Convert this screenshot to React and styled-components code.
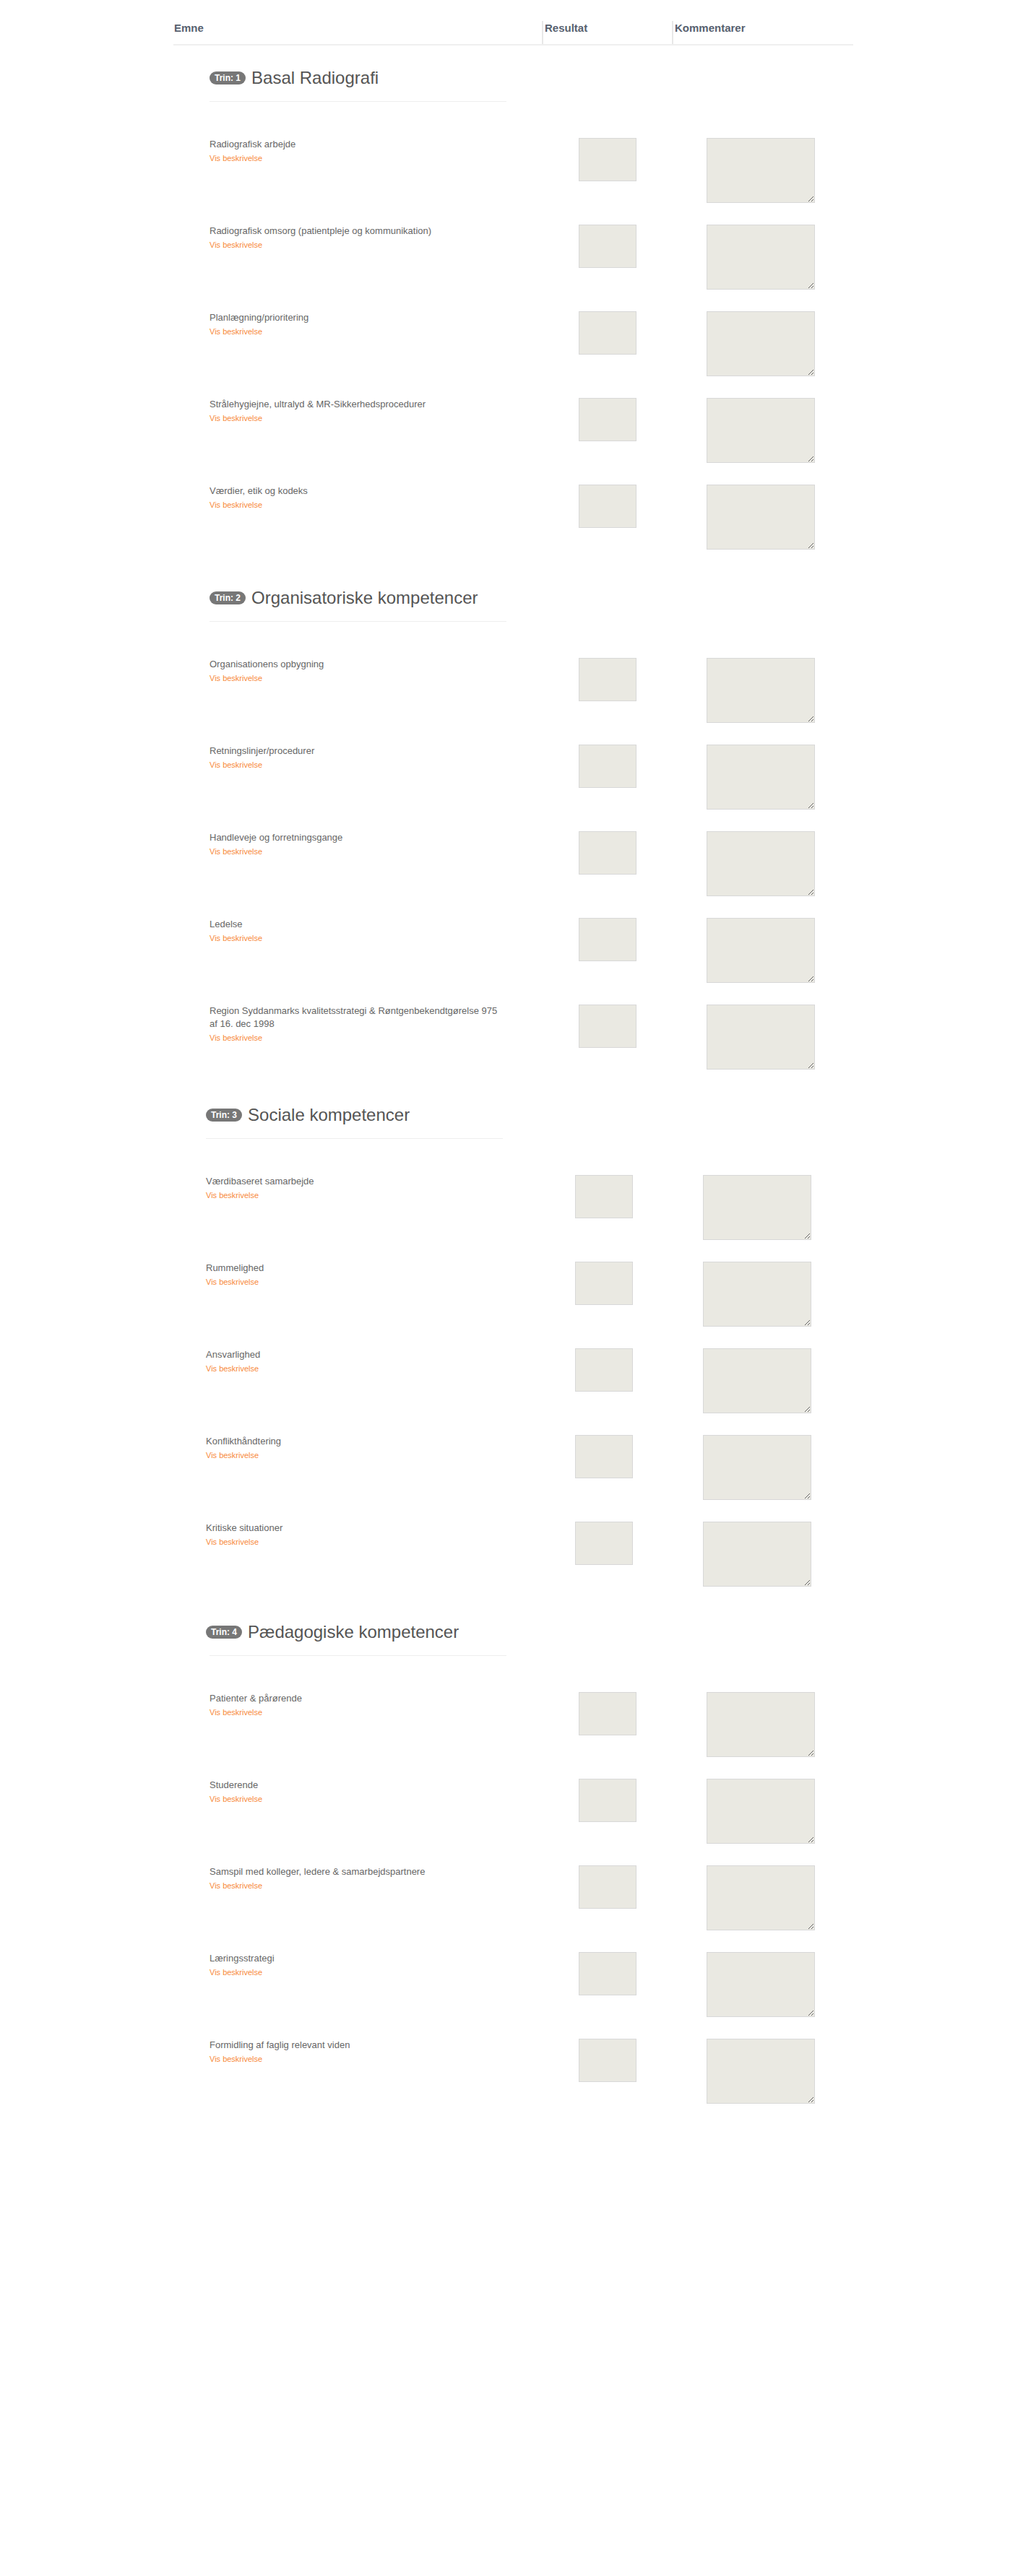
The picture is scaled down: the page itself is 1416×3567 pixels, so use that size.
import React from 'react';
import styled, { createGlobalStyle } from 'styled-components';

const GlobalStyle = createGlobalStyle`
  body {
    margin: 0;
    background: #ffffff;
    font-family: "Liberation Sans", Arial, sans-serif;
    color: #666666;
  }
`;

const Page = styled.div`
  width: 941px;
  margin: 0 0 0 240px;
  padding-top: 29px;
  padding-bottom: 120px;
`;

const HeadRow = styled.div`
  display: grid;
  grid-template-columns: 510px 180px 251px;
  border-bottom: 2px solid #efefef;
  margin-bottom: 12px;
`;

const HeadCell = styled.div`
  height: 32px;
  padding-left: ${(p) => (p.$first ? '1px' : '2px')};
  border-left: ${(p) => (p.$first ? 'none' : '2px solid #e8e8e8')};
  font-size: 15px;
  font-weight: 700;
  line-height: 20px;
  color: #57616f;
`;

const Section = styled.section`
  padding-top: ${(p) => p.$top || 20}px;
  padding-left: 50px;
  margin-left: ${(p) => p.$shift || 0}px;
`;

const SectionHeader = styled.div`
  width: 411px;
  padding-bottom: 19px;
  border-bottom: 1px solid #eeeeee;
  margin-bottom: 50px;
`;

const Title = styled.h3`
  margin: 0 0 0 ${(p) => p.$shift || 0}px;
  font-size: 24px;
  font-weight: 400;
  line-height: 26px;
  color: #555555;
  display: flex;
  align-items: center;
  gap: 8px;
`;

const Badge = styled.span`
  display: inline-block;
  padding: 3px 7px;
  font-size: 12px;
  font-weight: 700;
  line-height: 1;
  color: #ffffff;
  background: #777777;
  border-radius: 10px;
  white-space: nowrap;
`;

const Row = styled.div`
  display: grid;
  grid-template-columns: 511px 177px 150px;
  align-items: start;
  margin-bottom: 30px;
`;

const Topic = styled.div`
  padding-right: 100px;
  font-size: 13px;
  line-height: 18px;
  color: #666666;
`;

const DescLink = styled.a`
  display: block;
  margin-top: 2px;
  font-size: 11px;
  line-height: 16px;
  color: #f7893b;
  text-decoration: none;
`;

const ResultInput = styled.input`
  box-sizing: border-box;
  width: 80px;
  height: 60px;
  margin: 0;
  padding: 4px;
  background: #eae9e2;
  border: 1px solid #d8d8d8;
  border-radius: 0;
  font-family: inherit;
  font-size: 13px;
  color: #555;
  outline: none;
`;

const CommentArea = styled.textarea`
  display: block;
  box-sizing: border-box;
  width: 150px;
  height: 90px;
  margin: 0;
  padding: 4px;
  background: #eae9e2;
  border: 1px solid #d8d8d8;
  border-radius: 0;
  font-family: inherit;
  font-size: 13px;
  color: #555;
  outline: none;
`;

const sections = [
  {
    trin: 1,
    title: 'Basal Radiografi',
    items: [
      'Radiografisk arbejde',
      'Radiografisk omsorg (patientpleje og kommunikation)',
      'Planlægning/prioritering',
      'Strålehygiejne, ultralyd & MR-Sikkerhedsprocedurer',
      'Værdier, etik og kodeks',
    ],
  },
  {
    trin: 2,
    title: 'Organisatoriske kompetencer',
    top: 24,
    items: [
      'Organisationens opbygning',
      'Retningslinjer/procedurer',
      'Handleveje og forretningsgange',
      'Ledelse',
      'Region Syddanmarks kvalitetsstrategi & Røntgenbekendtgørelse 975 af 16. dec 1998',
    ],
  },
  {
    trin: 3,
    title: 'Sociale kompetencer',
    shift: -5,
    items: [
      'Værdibaseret samarbejde',
      'Rummelighed',
      'Ansvarlighed',
      'Konflikthåndtering',
      'Kritiske situationer',
    ],
  },
  {
    trin: 4,
    title: 'Pædagogiske kompetencer',
    titleShift: -5,
    items: [
      'Patienter & pårørende',
      'Studerende',
      'Samspil med kolleger, ledere & samarbejdspartnere',
      'Læringsstrategi',
      'Formidling af faglig relevant viden',
    ],
  },
];

const CompetenceRow = ({ name }) => (
  <Row>
    <Topic>
      {name}
      <DescLink href="#" onClick={(e) => e.preventDefault()}>Vis beskrivelse</DescLink>
    </Topic>
    <div>
      <ResultInput type="text" />
    </div>
    <CommentArea />
  </Row>
);

const App = () => {
  return (
    <>
      <GlobalStyle />
      <Page>
        <HeadRow>
          <HeadCell $first>Emne</HeadCell>
          <HeadCell>Resultat</HeadCell>
          <HeadCell>Kommentarer</HeadCell>
        </HeadRow>
        {sections.map((s) => (
          <Section key={s.trin} $shift={s.shift} $top={s.top}>
            <SectionHeader>
              <Title $shift={s.titleShift}>
                <Badge>Trin: {s.trin}</Badge>
                {s.title}
              </Title>
            </SectionHeader>
            {s.items.map((item) => (
              <CompetenceRow key={item} name={item} />
            ))}
          </Section>
        ))}
      </Page>
    </>
  );
};

export default App;
